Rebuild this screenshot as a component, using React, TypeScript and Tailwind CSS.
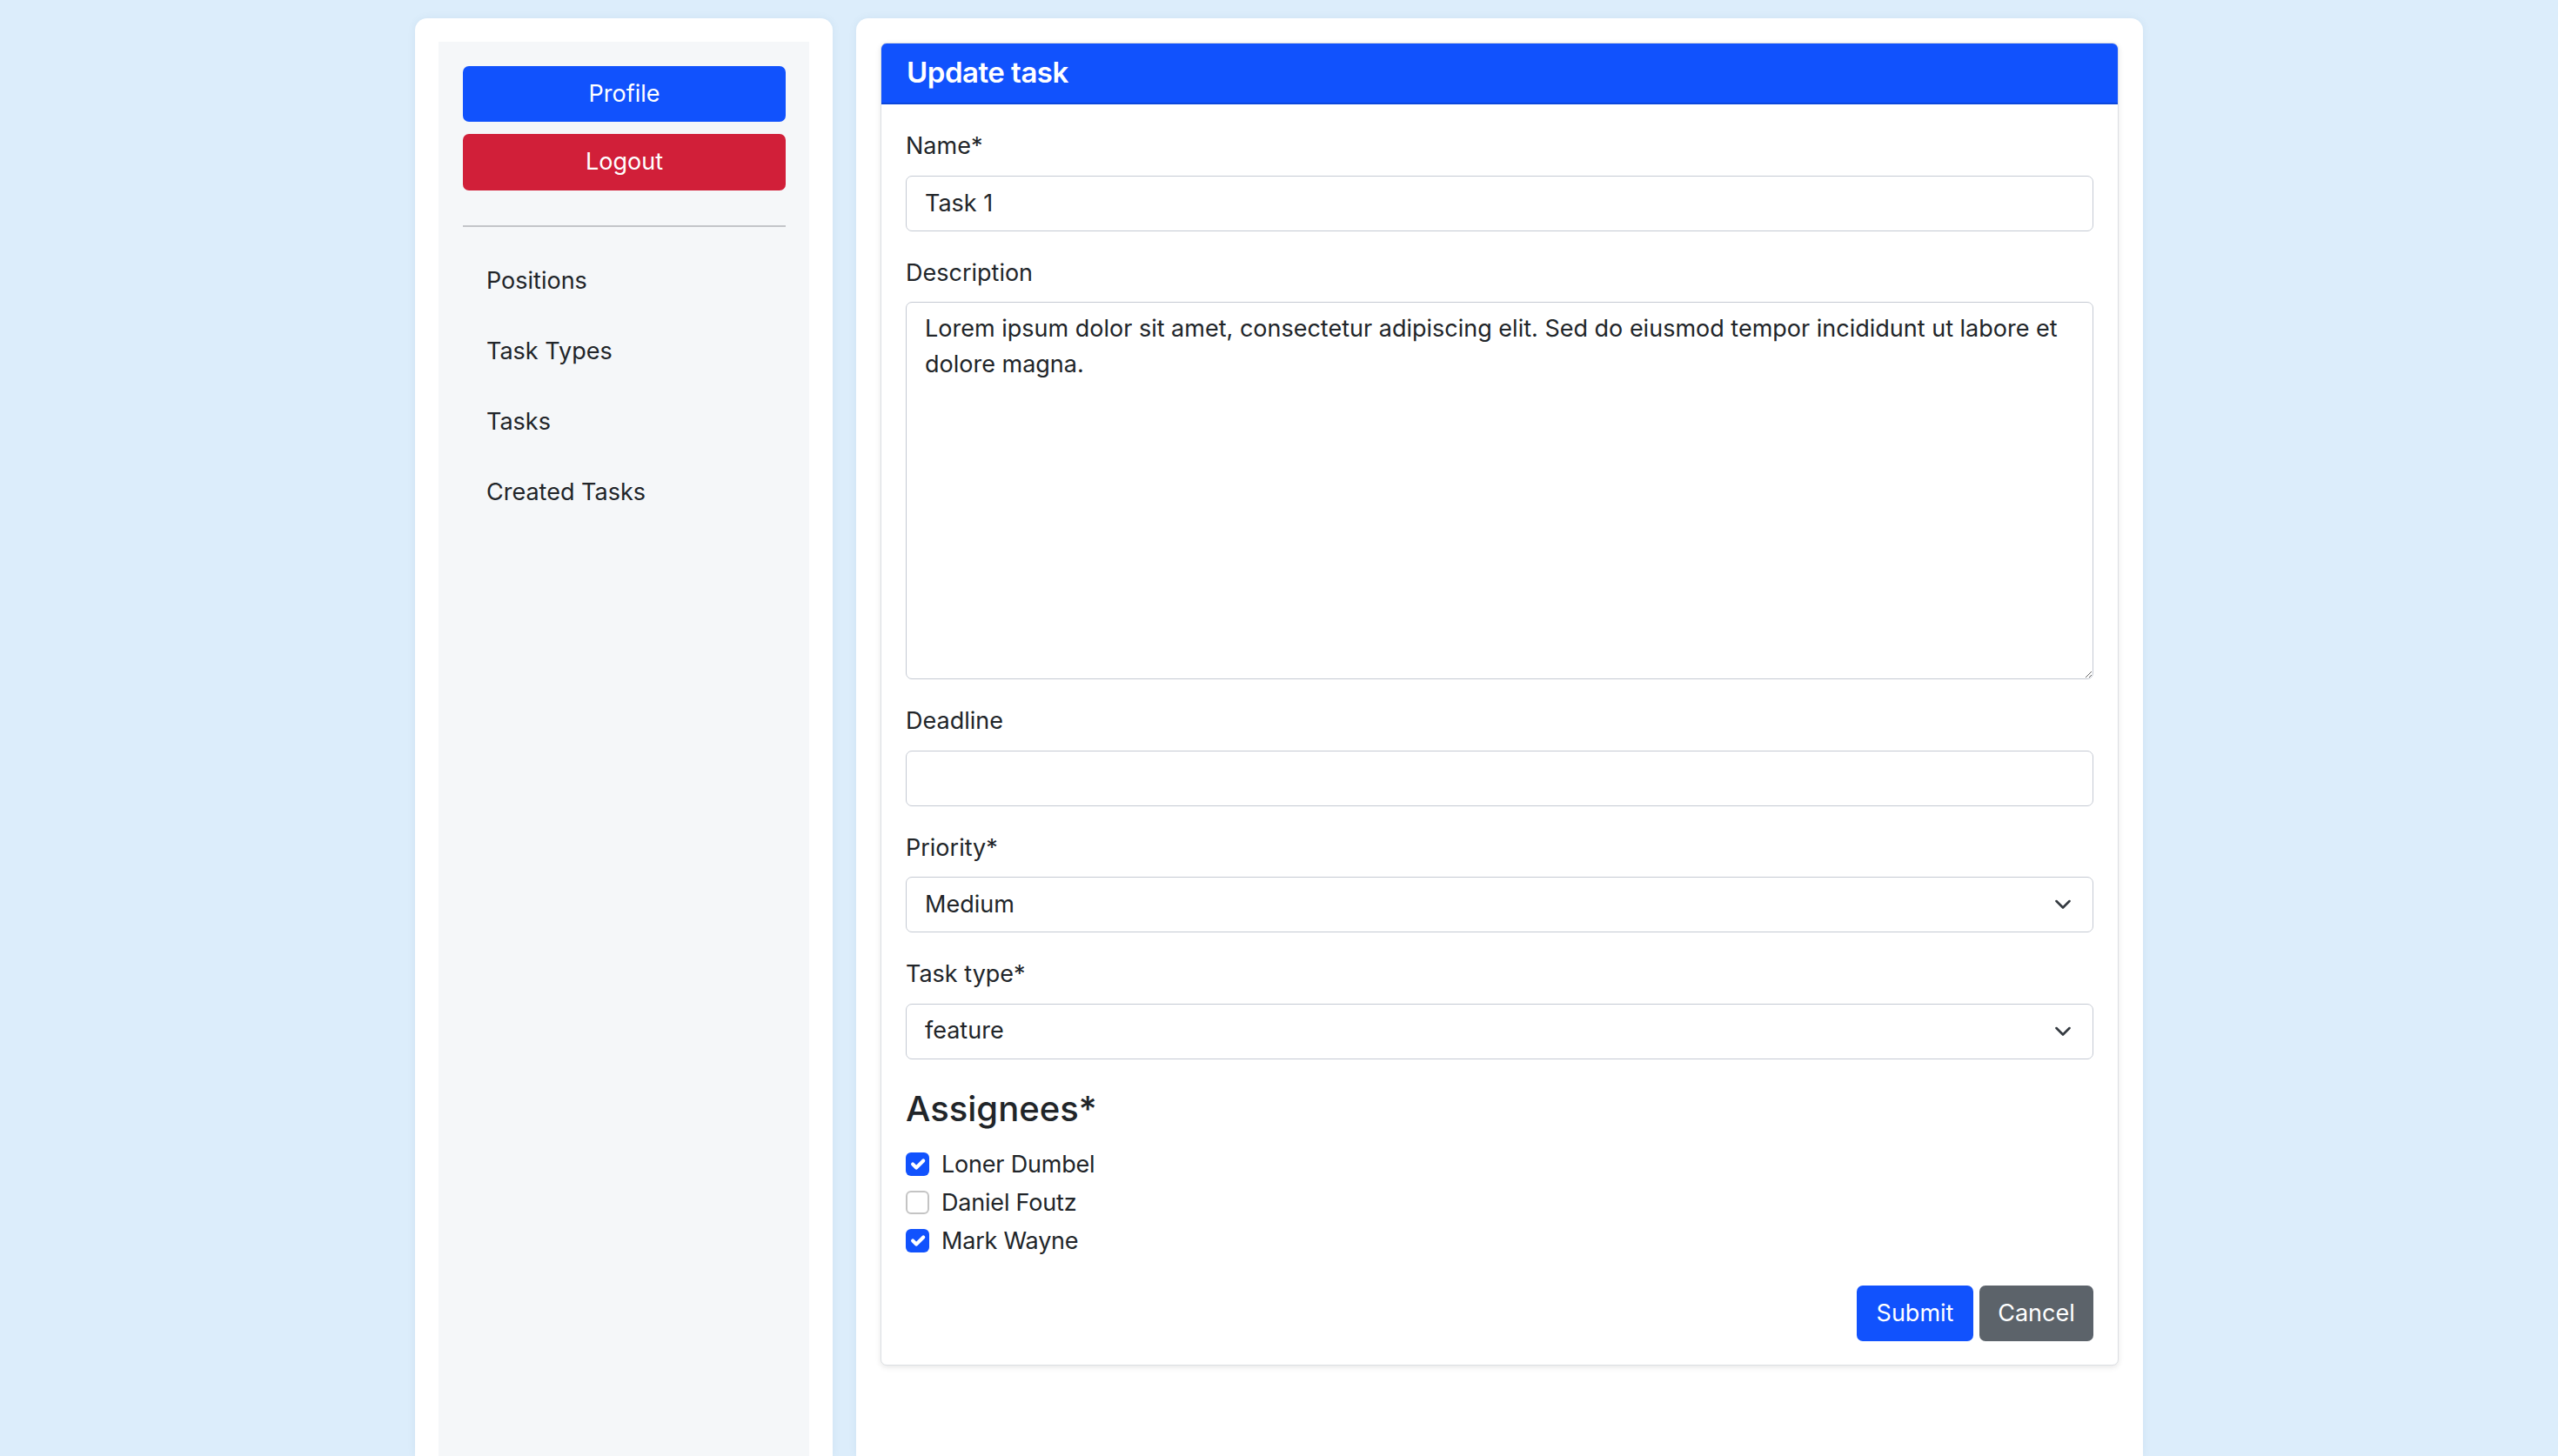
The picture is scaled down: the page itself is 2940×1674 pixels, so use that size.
import React from 'react';

const assignees = [
  { name: 'Loner Dumbel', checked: true },
  { name: 'Daniel Foutz', checked: false },
  { name: 'Mark Wayne', checked: true },
];

const navItems = ['Positions', 'Task Types', 'Tasks', 'Created Tasks'];

const Chevron = () => (
  <svg
    className="pointer-events-none absolute right-[26px] top-1/2 -translate-y-1/2"
    width="18"
    height="11"
    viewBox="0 0 18 11"
    fill="none"
  >
    <path d="M1.5 1.5 9 9l7.5-7.5" stroke="#343a40" strokeWidth="2.6" strokeLinecap="round" strokeLinejoin="round" />
  </svg>
);

const Label: React.FC<{ children: React.ReactNode }> = ({ children }) => (
  <label className="block text-[27px] leading-[40.5px] mb-[13px] text-[#212529]">{children}</label>
);

const inputClass =
  'block w-full h-[64px] bg-white border border-[#c5cad3] rounded-[7px] px-[21px] text-[27px] text-[#212529] outline-none';

const SelectField: React.FC<{ label: string; value: string; options: string[] }> = ({ label, value, options }) => (
  <div className="mb-[28px]">
    <Label>{label}</Label>
    <div className="relative">
      <select defaultValue={value} className={`${inputClass} appearance-none`}>
        {options.map((o) => (
          <option key={o}>{o}</option>
        ))}
      </select>
      <Chevron />
    </div>
  </div>
);

const Sidebar = () => (
  <aside className="w-[480px] bg-white rounded-t-[14px] px-[27px] pt-[27px] flex shadow-[0_0_10px_rgba(60,100,140,0.08)]">
    <div className="flex-1 bg-[#f5f7f9] pl-[28px] pr-[27px] pt-[28px]">
      <button className="w-full h-[64px] rounded-[7px] bg-[#1152fd] text-white text-[27px]">Profile</button>
      <button className="w-full h-[65px] mt-[14px] rounded-[7px] bg-[#d11f39] text-white text-[27px]">Logout</button>
      <hr className="mt-[40px] border-0 border-t-2 border-[#c3c5c9]" />
      <nav className="mt-[22px] flex flex-col">
        {navItems.map((item) => (
          <a key={item} href="#" className="h-[81px] flex items-center pl-[27px] text-[27px] text-[#212529]">
            {item}
          </a>
        ))}
      </nav>
    </div>
  </aside>
);

const TaskForm = () => (
  <div className="bg-white border border-[#dcdfe3] rounded-[7px] overflow-hidden shadow-[0_2px_6px_rgba(0,0,0,0.1)]">
    <div className="h-[70px] bg-[#1152fd] border-b-2 border-[#0c47dc] flex items-center px-[29px]">
      <h2 className="text-white text-[33px] font-semibold tracking-[-0.5px]">Update task</h2>
    </div>
    <form className="px-[28px] pt-[28px] pb-[27px]">
      <div className="mb-[28px]">
        <Label>Name*</Label>
        <input className={inputClass} defaultValue="Task 1" />
      </div>
      <div className="mb-[28px]">
        <Label>Description</Label>
        <textarea
          className="block w-full h-[434px] bg-white border border-[#c5cad3] rounded-[7px] px-[21px] py-[10px] text-[27px] leading-[40.5px] text-[#212529] outline-none resize-y"
          defaultValue="Lorem ipsum dolor sit amet, consectetur adipiscing elit. Sed do eiusmod tempor incididunt ut labore et dolore magna."
        />
      </div>
      <div className="mb-[28px]">
        <Label>Deadline</Label>
        <input className={inputClass} defaultValue="" />
      </div>
      <SelectField label="Priority*" value="Medium" options={['Low', 'Medium', 'High']} />
      <SelectField label="Task type*" value="feature" options={['feature', 'bug', 'chore']} />

      <h4 className="pt-[5px] text-[40px] leading-[48px] font-medium text-[#212529] mb-[20px]">Assignees*</h4>
      <div className="flex flex-col gap-[3.5px]">
        {assignees.map((a) => (
          <label key={a.name} className="h-[40.5px] flex items-center gap-[14px] text-[27px] text-[#212529]">
            {a.checked ? (
              <span className="w-[27px] h-[27px] rounded-[6px] bg-[#1152fd] flex items-center justify-center">
                <svg width="27" height="27" viewBox="0 0 20 20" fill="none">
                  <path d="m6 10 3 3 6-6" stroke="#fff" strokeWidth="3" strokeLinecap="round" strokeLinejoin="round" />
                </svg>
              </span>
            ) : (
              <span className="w-[27px] h-[27px] rounded-[6px] bg-white border-2 border-[#c4c4c4]" />
            )}
            <span className="tracking-[-0.2px]">{a.name}</span>
          </label>
        ))}
      </div>

      <div className="mt-[31px] flex justify-end gap-[7px]">
        <button type="button" className="h-[64px] w-[134px] rounded-[7px] bg-[#1152fd] text-white text-[27px]">
          Submit
        </button>
        <button type="button" className="h-[64px] w-[131px] rounded-[7px] bg-[#5c636a] text-white text-[27px]">
          Cancel
        </button>
      </div>
    </form>
  </div>
);

export default function App() {
  return (
    <div className="min-h-screen bg-[#dcedfb] flex justify-center gap-[27px] pt-[21px] font-['Inter',sans-serif] text-[#212529]">
      <Sidebar />
      <main className="w-[1479px] bg-white rounded-t-[14px] px-[28px] pt-[28px] shadow-[0_0_10px_rgba(60,100,140,0.08)]">
        <TaskForm />
      </main>
    </div>
  );
}
